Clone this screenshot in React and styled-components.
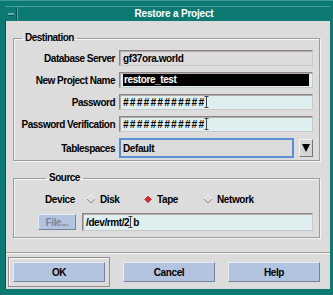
import React from "react";
import styled, { createGlobalStyle } from "styled-components";

const GlobalStyle = createGlobalStyle`
  body {
    margin: 0;
    background: #0c7a72;
    font-family: "Liberation Sans", Arial, sans-serif;
  }
`;

const Window = styled.div`
  width: 333px;
  height: 295px;
  box-sizing: border-box;
  background: #0c7a72;
  padding: 5px 3px 6px 5px;
  display: flex;
  flex-direction: column;
  border-top: 1px solid #3e9c95;
  font-family: "Liberation Sans", Arial, sans-serif;
  font-size: 10px;
  font-weight: bold;
  color: #000;
`;

const TitleBar = styled.div`
  height: 15px;
  display: flex;
  align-items: stretch;
  border-top: 1px solid #4aa39c;
  box-sizing: border-box;
`;

const MenuButton = styled.div`
  width: 11px;
  border-right: 1px solid #04544f;
  display: flex;
  align-items: center;
  justify-content: center;

  &::before {
    content: "";
    width: 6px;
    height: 2px;
    background: #5cb3ac;
    border-bottom: 1px solid #04544f;
  }
`;

const Title = styled.div`
  flex: 1;
  text-align: center;
  color: #fff;
  line-height: 13px;
  letter-spacing: -0.2px;
  border-left: 1px solid #4aa39c;
`;

const Content = styled.div`
  flex: 1;
  background: #dcdcdc;
  border-left: 1px solid #04544f;
  padding: 11px 10px 2px 7px;
  display: flex;
  flex-direction: column;
`;

const Group = styled.fieldset`
  margin: ${(p) => p.$top || 0}px 0 0 0;
  padding: ${(p) => p.$pad};
  border: 1px solid #a29a9a;
  box-shadow: 1px 1px 0 #f6f6f6, inset 1px 1px 0 #f6f6f6;
  min-width: 0;
`;

const Legend = styled.legend`
  margin-left: 8px;
  padding: 0 3px;
  line-height: 12px;
  letter-spacing: -0.5px;
`;

const FormGrid = styled.div`
  display: grid;
  grid-template-columns: 101px 1fr;
  column-gap: 4px;
  row-gap: 6px;
  align-items: center;
`;

const Label = styled.div`
  text-align: right;
  white-space: nowrap;
  letter-spacing: -0.5px;
`;

const Field = styled.div`
  height: ${(p) => p.$h || 16}px;
  box-sizing: border-box;
  background: ${(p) => p.$bg || "#dfeeee"};
  border: 1px solid;
  border-color: #8e8686 #c9c9c9 #c9c9c9 #8e8686;
  box-shadow: inset 1px 1px 0 #b4acac;
  padding: 0 3px;
  display: flex;
  align-items: center;
  white-space: nowrap;
  overflow: hidden;
  letter-spacing: -0.4px;
`;

const Selected = styled.span`
  flex: 1;
  background: #000;
  color: #fff;
  line-height: 12px;
  padding-left: 1px;
`;

const Hashes = styled.span`
  letter-spacing: 1.3px;
  font-style: italic;
`;

const ComboRow = styled.div`
  display: flex;
  align-items: center;
  gap: 5px;
`;

const ComboField = styled(Field)`
  flex: 1;
  background: #dcdcdc;
  border: 2px solid #5b8fcf;
  box-shadow: none;
  padding-left: 2px;
`;

const ArrowButton = styled.div`
  width: 14px;
  height: 18px;
  box-sizing: border-box;
  background: #d6d6d6;
  border: 1px solid;
  border-color: #f4f4f4 #7d7373 #7d7373 #f4f4f4;
  display: flex;
  align-items: center;
  justify-content: center;
`;

const SourceBody = styled.div`
  display: flex;
  flex-direction: column;
  gap: 7px;
`;

const DeviceRow = styled.div`
  display: flex;
  align-items: center;
  height: 14px;
  padding-left: 7px;
`;

const DeviceLabel = styled.span`
  width: 41px;
  letter-spacing: -0.4px;
`;

const Radio = styled.span`
  width: ${(p) => p.$w}px;
  display: flex;
  align-items: center;
  gap: 4px;
  letter-spacing: -0.4px;
`;

const FileRow = styled.div`
  display: flex;
  align-items: center;
  gap: 6px;
`;

const SmallButton = styled.div`
  width: 38px;
  height: 16px;
  box-sizing: border-box;
  background: #b2c4df;
  color: #7886a0;
  border: 1px solid;
  border-color: #e4ecf6 #76849a #76849a #e4ecf6;
  display: flex;
  align-items: center;
  justify-content: center;
  letter-spacing: -0.4px;
`;

const FileField = styled(Field)`
  flex: 1;
  height: 18px;
`;

const Separator = styled.div`
  margin-top: auto;
  height: 1px;
  background: #a29a9a;
  border-bottom: 1px solid #f6f6f6;
  margin-left: -7px;
  margin-right: -10px;
`;

const ButtonBar = styled.div`
  display: flex;
  align-items: center;
  justify-content: space-between;
  margin: 3px 0 0 -5px;
`;

const DefaultRing = styled.div`
  padding: 4px;
  border: 1px solid #968c8c;
  box-shadow: inset 1px 1px 0 #f6f6f6;
`;

const PushButton = styled.div`
  width: 92px;
  height: 20px;
  box-sizing: border-box;
  background: #b2c4df;
  border: 1px solid;
  border-color: #e4ecf6 #76849a #76849a #e4ecf6;
  display: flex;
  align-items: center;
  justify-content: center;
  letter-spacing: -0.4px;
`;

const Cursor = () => (
  <svg width="5" height="12" viewBox="0 0 5 12" style={{ marginLeft: -1 }}>
    <path d="M0.5 0.5h4M2.5 0.5v11M0.5 11.5h4" stroke="#444" strokeWidth="1" fill="none" />
  </svg>
);

const Diamond = ({ on }) => (
  <svg width="10" height="10" viewBox="0 0 10 10">
    <polygon points="5,1 9,5 5,9 1,5" fill={on ? "#e0282c" : "none"} />
    <polyline points="1,5 5,1 9,5" stroke={on ? "#f6f6f6" : "#f2f2f2"} fill="none" />
    <polyline points="1,5 5,9 9,5" stroke="#8e8686" fill="none" />
  </svg>
);

const DownArrow = () => (
  <svg width="8" height="10" viewBox="0 0 8 10">
    <polygon points="0,1 8,1 4,9" fill="#000" />
  </svg>
);

export default function App() {
  return (
    <>
      <GlobalStyle />
      <Window>
        <TitleBar>
          <MenuButton />
          <Title>Restore a Project</Title>
        </TitleBar>
        <Content>
          <Group $pad="6px 6px 2px 0">
            <Legend>Destination</Legend>
            <FormGrid>
              <Label>Database Server</Label>
              <Field $bg="#dcdcdc">gf37ora.world</Field>
              <Label>New Project Name</Label>
              <Field>
                <Selected>restore_test</Selected>
              </Field>
              <Label>Password</Label>
              <Field>
                <Hashes>############</Hashes>
                <Cursor />
              </Field>
              <Label>Password Verification</Label>
              <Field>
                <Hashes>############</Hashes>
                <Cursor />
              </Field>
              <Label>Tablespaces</Label>
              <ComboRow>
                <ComboField $h={20}>Default</ComboField>
                <ArrowButton>
                  <DownArrow />
                </ArrowButton>
              </ComboRow>
            </FormGrid>
          </Group>

          <Group $top={11} $pad="8px 6px 6px 24px">
            <Legend>Source</Legend>
            <SourceBody>
              <DeviceRow>
                <DeviceLabel>Device</DeviceLabel>
                <Radio $w={57}>
                  <Diamond /> Disk
                </Radio>
                <Radio $w={60}>
                  <Diamond on /> Tape
                </Radio>
                <Radio $w={70}>
                  <Diamond /> Network
                </Radio>
              </DeviceRow>
              <FileRow>
                <SmallButton>File...</SmallButton>
                <FileField>
                  /dev/rmt/2
                  <Cursor />
                  b
                </FileField>
              </FileRow>
            </SourceBody>
          </Group>

          <Separator />
          <ButtonBar>
            <DefaultRing>
              <PushButton>OK</PushButton>
            </DefaultRing>
            <PushButton>Cancel</PushButton>
            <PushButton>Help</PushButton>
          </ButtonBar>
        </Content>
      </Window>
    </>
  );
}
